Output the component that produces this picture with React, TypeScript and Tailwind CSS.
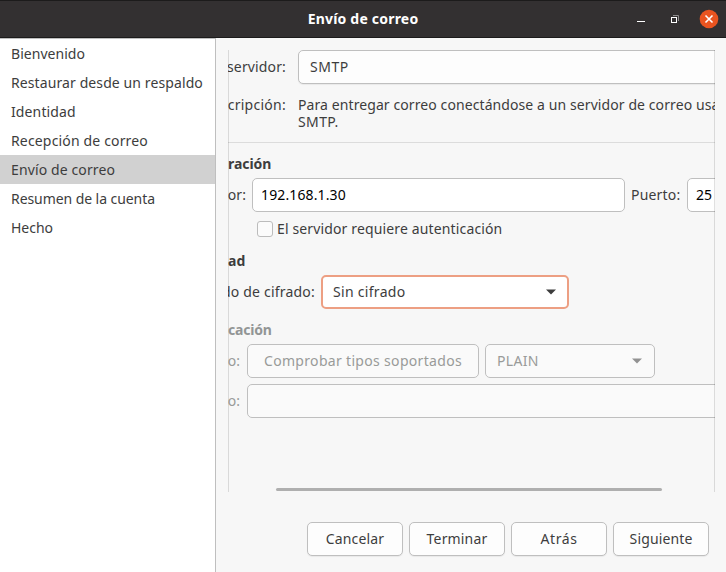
import type { ReactNode } from "react";

const STEPS = [
  { label: "Bienvenido", tracking: "tracking-[0.04px]" },
  { label: "Restaurar desde un respaldo", tracking: "tracking-[0.1px]" },
  { label: "Identidad", tracking: "tracking-[0.12px]" },
  { label: "Recepción de correo", tracking: "tracking-[0.16px]" },
  { label: "Envío de correo", tracking: "tracking-[0.12px]", active: true },
  { label: "Resumen de la cuenta", tracking: "tracking-[-0.07px]" },
  { label: "Hecho", tracking: "tracking-[-0.02px]" },
];

const ACTIONS = [
  { label: "Cancelar", tracking: "tracking-[0.14px]" },
  { label: "Terminar", tracking: "tracking-[0.16px]" },
  { label: "Atrás", tracking: "tracking-[0.6px]" },
  { label: "Siguiente", tracking: "tracking-[0.13px]" },
];

function Arrow({ className }: { className: string }) {
  return (
    <svg className={className} width="10" height="6" viewBox="0 0 10 6" fill="currentColor">
      <path d="M0 0.5h10L5 5.5z" />
    </svg>
  );
}

function TitleBar() {
  return (
    <header className="relative flex h-[38px] shrink-0 items-center justify-center border-y border-[#1c1b1b] bg-[#333031] text-white">
      <h1 className="text-[14px] font-bold tracking-[0.2px]">Envío de correo</h1>
      <div className="absolute inset-y-0 right-[7px] flex items-center">
        <svg width="84" height="36" viewBox="0 0 84 36" fill="none">
          <path d="M2 20.5h8" stroke="#fff" />
          <path d="M38 14.5h5.500V20" stroke="#8f8d8d" />
          <rect x="36.500" y="16.500" width="5" height="5" stroke="#fff" />
          <circle cx="74" cy="18" r="9.300" fill="#e95420" />
          <path d="M70.500 14.500l7 7M77.500 14.500l-7 7" stroke="#fff" strokeWidth="1.600" />
        </svg>
      </div>
    </header>
  );
}

function Sidebar() {
  return (
    <nav className="w-[216px] shrink-0 border-t border-r border-[#bfbfbf] bg-white">
      {STEPS.map((s) => (
        <div key={s.label} className={`flex h-[29px] items-center pl-[11px] ${s.active ? "bg-[#d1d1d1]" : ""}`}>
          <span className={s.tracking}>{s.label}</span>
        </div>
      ))}
    </nav>
  );
}

function Label({ className, children }: { className: string; children: ReactNode }) {
  return <div className={`flex shrink-0 justify-end ${className}`}>{children}</div>;
}

function Form() {
  return (
    <section className="relative h-[442px] w-[487px] shrink-0 overflow-hidden">
      <div className="w-[600px]">
        <div className="flex h-[34px] items-center">
          <Label className="w-[58px] tracking-[0.14px]">servidor:</Label>
          <div className="ml-3 flex h-full flex-1 items-center rounded-[5px] border border-[#bfbfbf] bg-[#fdfdfd] pl-[11px] tracking-[0.5px] shadow-[0_1px_1px_rgba(0,0,0,0.06)]">
            SMTP
          </div>
        </div>
        <div className="mt-3 flex h-[46px] leading-[17px]">
          <Label className="w-[58px] tracking-[0.26px]">cripción:</Label>
          <div className="ml-3 tracking-[0.09px]">
            <p>Para entregar correo conectándose a un servidor de correo usa</p>
            <p className="tracking-[0.4px]">SMTP.</p>
          </div>
        </div>
        <hr className="border-[#dcdcdc]" />

        <h2 className="mt-[11px] h-5 leading-5 font-bold tracking-[-0.06px]">ración</h2>
        <div className="mt-[4px] flex h-[34px] items-center">
          <Label className="w-[18px] tracking-[0.1px]">or:</Label>
          <div className="ml-1.5 flex h-full w-[373px] items-center rounded-[5px] border border-[#bfbfbf] bg-white pl-2 tracking-[0.12px] text-black">
            192.168.1.30
          </div>
          <span className="ml-1.5 w-[56px] tracking-[0.2px]">Puerto:</span>
          <div className="flex h-full flex-1 items-center rounded-[5px] border border-[#bfbfbf] bg-white pl-2 text-black">25</div>
        </div>
        <div className="mt-[7px] flex h-5 items-center pl-[29px]">
          <span className="size-4 rounded-[3px] border border-[#bcbcbc] bg-[#fbfbfb]" />
          <span className="ml-1 tracking-[0.14px]">El servidor requiere autenticación</span>
        </div>

        <h2 className="mt-[12px] h-5 leading-5 font-bold">ad</h2>
        <div className="mt-[4px] flex h-[34px] items-center">
          <Label className="w-[87px] tracking-[0.2px]">do de cifrado:</Label>
          <div className="ml-1.5 flex h-full w-[248px] items-center justify-between rounded-[5px] border-2 border-[#ed9f83] bg-white pr-[11px] pl-2.5 tracking-[0.3px]">
            Sin cifrado
            <Arrow className="text-[#3d3d3d]" />
          </div>
        </div>

        <div className="text-[#999b99]">
          <h2 className="mt-[11px] h-5 leading-5 font-bold tracking-[-0.2px] text-[#929595]">cación</h2>
          <div className="mt-[4px] flex h-[34px] items-center">
            <Label className="w-[13px] pr-px">o:</Label>
            <div className="ml-1.5 flex h-full w-[232px] items-center justify-center rounded-[5px] border border-[#bfbfbf] bg-[#fafafa] tracking-[0.32px]">
              Comprobar tipos soportados
            </div>
            <div className="ml-1.5 flex h-full w-[170px] items-center justify-between rounded-[5px] border border-[#bfbfbf] bg-[#fafafa] pr-3 pl-[11px] tracking-[0.3px]">
              PLAIN
              <Arrow className="text-[#929292]" />
            </div>
          </div>
          <div className="mt-1.5 flex h-[34px] items-center">
            <Label className="w-[13px] pr-px">o:</Label>
            <div className="ml-1.5 h-full flex-1 rounded-[5px] border border-[#bfbfbf] bg-[#fafafa]" />
          </div>
        </div>
      </div>
      <div className="pointer-events-none absolute inset-0 border-x border-black/12" />
      <div className="absolute bottom-px left-12 h-[3px] w-[386px] rounded-full bg-[#afafaf]" />
    </section>
  );
}

export default function App() {
  return (
    <div className="flex h-[572px] w-[726px] flex-col overflow-hidden bg-[#f7f7f7] font-['Noto_Sans','Open_Sans',sans-serif] text-[14px] leading-5 whitespace-nowrap text-[#3d3d3d]">
      <TitleBar />
      <div className="flex min-h-0 flex-1">
        <Sidebar />
        <main className="flex flex-1 flex-col pt-3 pl-3">
          <Form />
          <footer className="mt-[30px] flex justify-end gap-1.5 pr-[17px]">
            {ACTIONS.map((a) => (
              <button
                key={a.label}
                className={`h-[34px] w-24 rounded-[5px] border border-[#bfbfbf] bg-[#fdfdfd] shadow-[0_1px_1px_rgba(0,0,0,0.06)] ${a.tracking}`}
              >
                {a.label}
              </button>
            ))}
          </footer>
        </main>
      </div>
    </div>
  );
}
